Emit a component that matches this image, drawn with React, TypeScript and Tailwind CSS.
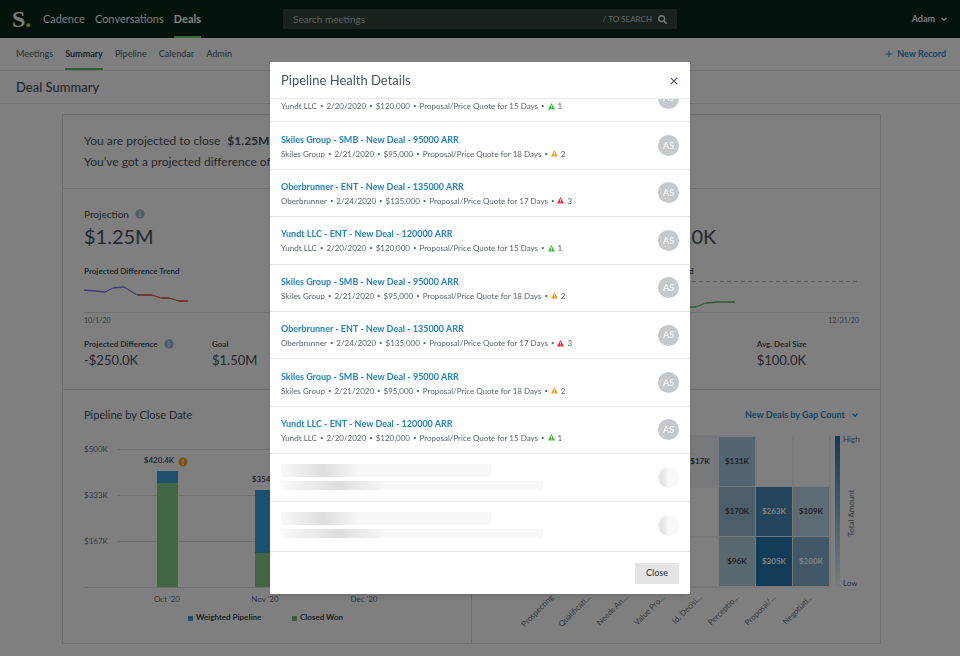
import { useState } from "react";
import { FaSearch } from "react-icons/fa";
import clsx from "clsx";

type Severity = "low" | "medium" | "high";

interface Deal {
  name: string;
  account: string;
  date: string;
  amount: string;
  days: number;
  severity: Severity;
  alerts: number;
}

const YUNDT: Deal = {
  name: "Yundt LLC - ENT - New Deal - 120000 ARR",
  account: "Yundt LLC",
  date: "2/20/2020",
  amount: "$120,000",
  days: 15,
  severity: "low",
  alerts: 1,
};

const SKILES: Deal = {
  name: "Skiles Group - SMB - New Deal - 95000 ARR",
  account: "Skiles Group",
  date: "2/21/2020",
  amount: "$95,000",
  days: 18,
  severity: "medium",
  alerts: 2,
};

const OBERBRUNNER: Deal = {
  name: "Oberbrunner - ENT - New Deal - 135000 ARR",
  account: "Oberbrunner",
  date: "2/24/2020",
  amount: "$135,000",
  days: 17,
  severity: "high",
  alerts: 3,
};

const DEALS = [YUNDT, SKILES, OBERBRUNNER, YUNDT, SKILES, OBERBRUNNER, SKILES, YUNDT];

const SEVERITY_COLOR: Record<Severity, string> = {
  low: "text-[#3fb943]",
  medium: "text-[#ff9f1c]",
  high: "text-[#f0282d]",
};

const MAIN_NAV = ["Cadence", "Conversations", "Deals"];
const SUB_NAV = ["Meetings", "Summary", "Pipeline", "Calendar", "Admin"];

function Chevron({ className }: { className?: string }) {
  return (
    <svg viewBox="0 0 8 8" className={clsx("size-2", className)} fill="none" stroke="currentColor" strokeWidth="1.5">
      <path d="M1.5 2.8 4 5.3l2.5-2.5" />
    </svg>
  );
}

function InfoIcon() {
  return (
    <svg viewBox="0 0 10 10" className="size-[10px] shrink-0">
      <circle cx="5" cy="5" r="4.7" fill="#9dbccd" />
      <path d="M4.3 2.1h1.4v1.2H4.3zM3.9 4.1h1.7v2.8h.6v.9H3.8v-.9h.6V5h-.5z" fill="#e6eef2" />
    </svg>
  );
}

function AlertIcon({ severity }: { severity: Severity }) {
  return (
    <svg viewBox="0 0 14 14" className={clsx("size-[7px]", SEVERITY_COLOR[severity])}>
      <path d="M7 0 14 13H0z" fill="currentColor" />
      <path d="M6.2 4.5h1.6v4H6.2zM6.2 9.5h1.6V11H6.2z" fill="#fff" />
    </svg>
  );
}

function Header() {
  return (
    <header className="flex h-[38px] items-stretch bg-[#062415] px-3 text-[11px] text-[#f3f6f4]">
      <a
        href="#home"
        aria-label="Home"
        className="flex w-[31px] shrink-0 items-center font-['Liberation_Serif',serif] text-[24px] leading-6 font-bold"
      >
        S<span className="text-[#b5e61d]">.</span>
      </a>
      <nav className="flex w-[240px] shrink-0 gap-[10px]">
        {MAIN_NAV.map((item) => (
          <a
            key={item}
            href={`#${item.toLowerCase()}`}
            className={clsx(
              "flex items-center border-b-2 pt-[2px]",
              item === "Deals" ? "border-[#6fcf7a] font-bold text-white" : "border-transparent",
            )}
          >
            {item}
          </a>
        ))}
      </nav>
      <label className="my-[9px] flex w-[394px] items-center bg-[#33463c] px-[10px]">
        <input
          type="search"
          placeholder="Search meetings"
          aria-label="Search meetings"
          className="min-w-0 flex-1 text-[10px] outline-none placeholder:text-[#b3bdb8]"
        />
        <span className="mr-[6px] text-[8px] text-[#c3ccc7]">/ TO SEARCH</span>
        <FaSearch className="size-[9px]" />
      </label>
      <button type="button" className="ml-auto flex items-center gap-[5px] text-[9px] font-bold">
        Adam <Chevron />
      </button>
    </header>
  );
}

function SubNav() {
  return (
    <div className="flex h-[33px] border-b border-[#e0e2e5] pr-[14px] pl-4 text-[9px] font-semibold text-[#6b7482]">
      <nav className="flex gap-3">
        {SUB_NAV.map((item) => (
          <a
            key={item}
            href={`#${item.toLowerCase()}`}
            className={clsx(
              "flex items-center border-b-2 pt-[2px]",
              item === "Summary" ? "border-[#56b868] font-bold text-[#3c434d]" : "border-transparent",
            )}
          >
            {item}
          </a>
        ))}
      </nav>
      <button type="button" className="ml-auto flex items-center gap-1 font-bold text-[#2a8ccb]">
        <svg viewBox="0 0 8 8" className="size-2" stroke="currentColor">
          <path d="M4 .5v7M.5 4h7" />
        </svg>
        New Record
      </button>
    </div>
  );
}

interface MetricProps {
  label: string;
  value: string;
  info?: boolean;
}

function Metric({ label, value, info }: MetricProps) {
  return (
    <div className="w-32 shrink-0">
      <div className="flex h-[14px] items-center gap-[6px] text-[8px] font-bold text-[#4a515b]">
        {label}
        {info && <InfoIcon />}
      </div>
      <div className="text-[13px] leading-[18px]">{value}</div>
    </div>
  );
}

interface ProjectionProps {
  title: string;
  value: string;
  trend: string;
  children: React.ReactNode;
  metrics: MetricProps[];
}

function Projection({ title, value, trend, children, metrics }: ProjectionProps) {
  return (
    <section className="px-[21px] pt-[17px]">
      <h2 className="flex h-4 items-center gap-[6px] text-[10px]">
        {title}
        <InfoIcon />
      </h2>
      <p className="text-[20px] leading-7">{value}</p>
      <h3 className="mt-[15px] text-[8px] leading-3 font-bold text-[#4a515b]">{trend}</h3>
      <svg className="h-[36px] w-full overflow-visible" fill="none" strokeLinejoin="round">
        {children}
        <line x1="0" x2="100%" y1="35.5" y2="35.5" stroke="#dcdfe2" />
      </svg>
      <div className="mt-px flex justify-between text-[7px] leading-3 text-[#6b7280]">
        <span>10/1/20</span>
        <span>12/31/20</span>
      </div>
      <div className="mt-[11px] flex">
        {metrics.map((metric) => (
          <Metric key={metric.label} {...metric} />
        ))}
      </div>
    </section>
  );
}

const BARS = [
  { month: "Oct '20", label: "$420.4K", x: 83, labelX: 75, top: 41, split: 53 },
  { month: "Nov '20", label: "$354.5K", x: 181, labelX: 183, top: 60, split: 123 },
  { month: "Dec '20", label: "$298.0K", x: 280, labelX: 280, top: 75, split: 140 },
];

function CloseDateChart() {
  return (
    <svg width="365" height="200" className="text-[8px]" fill="#6b7280">
      {[
        ["$500K", 20],
        ["$333K", 66],
        ["$167K", 112],
      ].map(([label, y]) => (
        <g key={label}>
          <text x="0" y={Number(y) + 2}>{label}</text>
          <line x1="34" x2="360" y1={Number(y) - 0.5} y2={Number(y) - 0.5} stroke="#dcdfe2" />
        </g>
      ))}
      <line x1="0" x2="360" y1="157.5" y2="157.5" stroke="#dcdfe2" />
      {BARS.map(({ month, label, x, labelX, top, split }) => (
        <g key={month}>
          <rect x={x - 10} y={top} width="21" height={split - top} fill="#3ba0dc" />
          <rect x={x - 10} y={split} width="21" height={157 - split} fill="#86cc88" />
          <text x={labelX} y={top - 8} textAnchor="middle" fill="#3c434d" fontWeight="600">{label}</text>
          <text x={x} y="172" textAnchor="middle">{month}</text>
        </g>
      ))}
      <circle cx="99" cy="32" r="4.5" fill="#f9a11b" />
      <path d="M98.4 29h1.4v3.8h-1.4zM98.4 33.7h1.4V35h-1.4z" fill="#fff" />
      <g fill="#3c434d" fontWeight="700">
        <rect x="104" y="186" width="5" height="5" fill="#3ba0dc" />
        <text x="112" y="190">Weighted Pipeline</text>
        <rect x="208" y="186" width="5" height="5" fill="#6fbf73" />
        <text x="216" y="190">Closed Won</text>
      </g>
    </svg>
  );
}

const STAGES = [
  "Prospecting",
  "Qualificati...",
  "Needs An...",
  "Value Pro...",
  "Id. Decisi...",
  "Perceptio...",
  "Proposal/...",
  "Negotiati...",
];

const HEAT_CELLS = [
  { col: 4, row: 0, label: "$17K", fill: "#eef1f6" },
  { col: 5, row: 0, label: "$131K", fill: "#a6cbe0" },
  { col: 5, row: 1, label: "$170K", fill: "#98bdd4" },
  { col: 6, row: 1, label: "$263K", fill: "#478cb8", light: true },
  { col: 7, row: 1, label: "$109K", fill: "#bbd6e6" },
  { col: 5, row: 2, label: "$96K", fill: "#b4d0e0" },
  { col: 6, row: 2, label: "$305K", fill: "#2079b0", light: true },
  { col: 7, row: 2, label: "$200K", fill: "#80b0cf", light: true },
];

function GapHeatmap() {
  return (
    <svg width="365" height="200" className="overflow-visible text-[8px]" fill="#6b7280">
      <defs>
        <linearGradient id="heat-scale" x1="0" x2="0" y1="0" y2="1">
          <stop offset="0" stopColor="#2079b0" />
          <stop offset="1" stopColor="#f7f9fb" />
        </linearGradient>
      </defs>
      <g transform="translate(40 6)">
        {STAGES.map((stage, col) => (
          <g key={stage}>
            <line x1={col * 37} x2={col * 37} y1="0" y2="151" stroke="#e4e6e9" />
            <text transform={`translate(${col * 37 + 20} 162) rotate(-45)`} textAnchor="end">{stage}</text>
          </g>
        ))}
        <line x1="296" x2="296" y1="0" y2="151" stroke="#e4e6e9" />
        {[0, 51, 101, 151].map((y) => (
          <line key={y} x1="0" x2={y === 0 ? 222 : 296} y1={y} y2={y} stroke="#e4e6e9" />
        ))}
        {HEAT_CELLS.map(({ col, row, label, fill, light }) => (
          <g key={label}>
            <rect x={col * 37} y={row * 50 + 1} width="36" height="49" fill={fill} />
            <text
              x={col * 37 + 18}
              y={row * 50 + 28}
              textAnchor="middle"
              fontWeight="700"
              fill={light ? "#ffffff" : "#3c434d"}
            >
              {label}
            </text>
          </g>
        ))}
      </g>
      <rect x="341" y="6" width="5" height="151" fill="url(#heat-scale)" />
      <text x="349" y="12">High</text>
      <text x="349" y="156">Low</text>
      <text transform="translate(360 83) rotate(-90)" textAnchor="middle">Total Amount</text>
    </svg>
  );
}

function Dashboard() {
  return (
    <div className="min-h-screen bg-white text-[#4a505a]">
      <Header />
      <SubNav />
      <h1 className="flex h-[33px] items-center border-b border-[#e0e2e5] px-4 pt-[2px] text-[13px] font-medium">
        Deal Summary
      </h1>
      <main className="pt-[10px] pr-[79px] pb-3 pl-[62px]">
        <div className="divide-y divide-[#dcdfe2] border border-[#dcdfe2]">
          <div className="h-[74px] px-[21px] pt-[15px] text-[12px] leading-[21px]">
            <p>
              You are projected to close <b className="ml-1">$1.25M</b> this quarter.
            </p>
            <p>
              You’ve got a projected difference of <b>-$250.0K</b> to goal.
            </p>
          </div>
          <div className="grid h-[201px] grid-cols-3">
            <Projection
              title="Projection"
              value="$1.25M"
              trend="Projected Difference Trend"
              metrics={[
                { label: "Projected Difference", value: "-$250.0K", info: true },
                { label: "Goal", value: "$1.50M" },
              ]}
            >
              <path d="m0 13 11 1 10 1 8-4 11-1 13 8" stroke="#7f7fe0" strokeWidth="1.3" />
              <path d="M53 18h15l9 3h8l10 3h9" stroke="#dc4650" strokeWidth="1.3" />
            </Projection>
            <Projection
              title="Pipeline"
              value="$1.10M"
              trend="Pipeline Trend"
              metrics={[
                { label: "Coverage", value: "2.2x" },
                { label: "Open Deals", value: "11" },
              ]}
            >
              <path d="M0 24h30l20-6h30l24-4" stroke="#4a9bd1" />
            </Projection>
            <Projection
              title="Gap"
              value="+$500.0K"
              trend="Closed Won Trend"
              metrics={[
                { label: "Win Rate", value: "34%" },
                { label: "Avg. Deal Size", value: "$100.0K" },
              ]}
            >
              <line x1="0" x2="100%" y1="4.5" y2="4.5" stroke="#b5b9bf" strokeDasharray="4 3" />
              <path d="M0 33h38l22-3h7l10-4 12-1h17" stroke="#5fb96b" strokeWidth="1.3" />
            </Projection>
          </div>
          <div className="grid grid-cols-2 divide-x divide-[#dcdfe2]">
            <section className="px-[21px] pt-4 pb-[13px]">
              <h2 className="mb-[6px] text-[11px] leading-[18px]">Pipeline by Close Date</h2>
              <CloseDateChart />
            </section>
            <section className="flex flex-col items-end pt-4 pr-[21px] pb-[13px]">
              <div className="relative mb-[6px] flex items-center text-[9px] leading-[18px] font-bold text-[#2a8ccb]">
                <select aria-label="Heatmap measure" className="appearance-none pr-[13px]">
                  <option>New Deals by Gap Count</option>
                </select>
                <Chevron className="pointer-events-none absolute right-0" />
              </div>
              <GapHeatmap />
            </section>
          </div>
        </div>
      </main>
    </div>
  );
}

function DealRow({ deal }: { deal: Deal }) {
  const details = [deal.account, deal.date, deal.amount, `Proposal/Price Quote for ${deal.days} Days`];

  return (
    <li className="flex items-center justify-between border-b border-[#e9ebed] px-[11px]">
      <div className="pt-[2px]">
        <a href="#deal" className="block text-[9px] leading-[14px] font-bold text-[#2583bb]">
          {deal.name}
        </a>
        <div className="flex items-center gap-[3px] text-[8px] leading-[14px] text-[#5b6270]">
          {details.map((detail) => (
            <span key={detail} className="flex gap-[3px]">
              {detail} <span className="text-[6px]">•</span>
            </span>
          ))}
          <AlertIcon severity={deal.severity} />
          <span>{deal.alerts}</span>
        </div>
      </div>
      <span className="flex size-[21px] items-center justify-center rounded-full bg-[#c6c9cc] text-[9px] font-bold text-[#f3f4f5]">
        AS
      </span>
    </li>
  );
}

function SkeletonRow() {
  return (
    <li className="flex items-center justify-between border-b border-[#e9ebed] px-[11px] last:border-b-0">
      <div className="flex flex-1 flex-col gap-1">
        <div className="h-[13px] w-[210px] bg-[linear-gradient(90deg,#f6f8f9_0%,#dedede_20%,#f6f8f9_38%)]" />
        <div className="h-[9px] w-[262px] bg-[linear-gradient(90deg,#f6f8f9_0%,#dedede_22%,#f6f8f9_40%)]" />
      </div>
      <div className="size-[21px] rounded-full bg-[linear-gradient(90deg,#e9eaeb_0%,#e2e4e5_20%,#f6f8f9_50%)]" />
    </li>
  );
}

function HealthModal({ onClose }: { onClose: () => void }) {
  return (
    <div className="fixed inset-0 flex items-center justify-center bg-black/50">
      <div
        role="dialog"
        aria-labelledby="health-title"
        className="flex h-[calc(100vh-124px)] w-[420px] flex-col rounded-[1px] bg-white shadow-md"
      >
        <div className="flex h-[37px] shrink-0 items-center justify-between border-b border-[#e9ebed] pt-[2px] pr-3 pl-[11px]">
          <h2 id="health-title" className="text-[13px] text-[#4b525f]">
            Pipeline Health Details
          </h2>
          <button type="button" aria-label="Close dialog" onClick={onClose} className="text-[#4b525f]">
            <svg viewBox="0 0 8 8" className="size-2" stroke="currentColor" strokeWidth="1.2">
              <path d="m.8.8 6.4 6.4M7.2.8.8 7.2" />
            </svg>
          </button>
        </div>
        <div className="flex min-h-0 flex-1 flex-col justify-end overflow-hidden pb-[2px]">
          <ul className="grid h-[474px] shrink-0 grid-rows-10">
            {DEALS.map((deal, i) => (
              <DealRow key={i} deal={deal} />
            ))}
            <SkeletonRow />
            <SkeletonRow />
          </ul>
        </div>
        <div className="flex h-[43px] shrink-0 items-center justify-end border-t border-[#e9ebed] pr-[11px]">
          <button type="button" onClick={onClose} className="h-[21px] w-[44px] bg-[#e4e4e4] text-[9px] font-medium text-[#3c434d]">
            Close
          </button>
        </div>
      </div>
    </div>
  );
}

export default function App() {
  const [open, setOpen] = useState(true);

  return (
    <div className="font-[Lato,sans-serif]">
      <Dashboard />
      {open && <HealthModal onClose={() => setOpen(false)} />}
    </div>
  );
}
